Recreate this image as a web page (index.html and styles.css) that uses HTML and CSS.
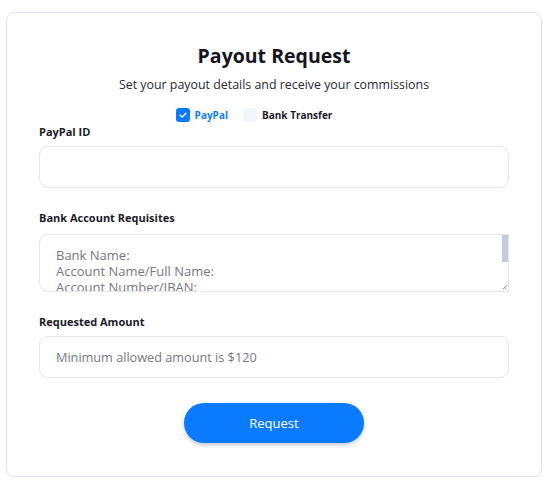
FILE: index.html
```html
<!DOCTYPE html>
<html lang="en">
<head>
<meta charset="utf-8">
<title>Payout Request</title>
<link rel="stylesheet" href="styles.css">
</head>
<body>
<div class="card">
  <h1 class="title">Payout Request</h1>
  <p class="subtitle">Set your payout details and receive your commissions</p>
  <div class="methods">
    <label class="method active">
      <span class="box checked">
        <svg width="10" height="10" viewBox="0 0 10 10"><path d="M2.2 5.2 L4.2 7.1 L7.9 3.2" fill="none" stroke="#fff" stroke-width="1.4" stroke-linecap="round" stroke-linejoin="round"/></svg>
      </span>
      <span class="method-text">PayPal</span>
    </label>
    <label class="method">
      <span class="box"></span>
      <span class="method-text">Bank Transfer</span>
    </label>
  </div>
  <div class="field">
    <div class="label">PayPal ID</div>
    <div class="input"></div>
  </div>
  <div class="field">
    <div class="label">Bank Account Requisites</div>
    <div class="textarea">
      <div class="ta-line">Bank Name:</div>
      <div class="ta-line">Account Name/Full Name:</div>
      <div class="ta-line">Account Number/IBAN:</div>
      <span class="scroll"></span>
      <svg class="grip" width="5" height="5" viewBox="0 0 5 5"><path d="M4.5 0.5 L0.5 4.5 M4.5 2.5 L2.5 4.5" stroke="#888" stroke-width="0.8"/></svg>
    </div>
  </div>
  <div class="field">
    <div class="label">Requested Amount</div>
    <div class="input placeholder">Minimum allowed amount is $120</div>
  </div>
  <div class="actions">
    <button class="btn">Request</button>
  </div>
</div>
</body>
</html>
```

FILE: styles.css
```css
* { box-sizing: border-box; }
html, body { margin: 0; padding: 0; background: #fff; }
body {
  padding: 12px 6px 0 6px;
  font-family: "Open Sans", "Liberation Sans", sans-serif;
  color: #1c1c28;
}
.card {
  width: 536px;
  height: 465px;
  border: 1px solid #dde2ec;
  border-radius: 8px;
  padding: 29px 32px 0 32px;
}
.title {
  margin: 0;
  text-align: center;
  font-size: 19.5px;
  font-weight: 700;
  line-height: 28px;
  color: #16141f;
}
.subtitle {
  margin: 5px 0 0 0;
  text-align: center;
  font-size: 12.4px;
  line-height: 20px;
  color: #2a2a33;
}
.methods {
  display: flex;
  justify-content: center;
  gap: 15px;
  margin-top: 13px;
  padding-right: 40px;
}
.method {
  display: flex;
  align-items: center;
  gap: 5px;
  font-size: 10px;
  font-weight: 700;
  line-height: 14px;
  color: #1c1a26;
}
.method.active { color: #0d7bf2; }
.box {
  width: 14px;
  height: 14px;
  border-radius: 3px;
  background: #f3f6fa;
  display: flex;
  align-items: center;
  justify-content: center;
}
.box.checked { background: #0a7bff; }
.label {
  font-size: 11px;
  font-weight: 700;
  line-height: 16px;
  color: #1c1a26;
}
.methods + .field { margin-top: 2px; }
.field + .field { margin-top: 22px; }
.input {
  margin-top: 6px;
  height: 42px;
  border: 1px solid #e5e7ee;
  border-radius: 9px;
  padding: 0 16px;
  display: flex;
  align-items: center;
  font-size: 12.7px;
  color: #77777f;
}
.textarea {
  position: relative;
  margin-top: 8px;
  height: 58px;
  border: 1px solid #e5e7ee;
  border-radius: 9px 0 0 9px;
  overflow: hidden;
  padding: 12px 16px 0 16px;
}
.ta-line {
  font-size: 13px;
  line-height: 16px;
  height: 16px;
  color: #77777f;
}
.scroll {
  position: absolute;
  right: 0;
  top: 0;
  width: 6px;
  height: 27px;
  background: #c4cbdf;
}
.grip {
  position: absolute;
  right: 1px;
  bottom: 1px;
}
.actions {
  display: flex;
  justify-content: center;
  margin-top: 25px;
}
.btn {
  width: 180px;
  height: 40px;
  border: none;
  border-radius: 20px;
  background: #0a7bff;
  color: #fff;
  font-family: inherit;
  font-size: 13px;
  font-weight: 500;
  box-shadow: 0 2px 4px rgba(0, 40, 90, 0.25);
}
```
